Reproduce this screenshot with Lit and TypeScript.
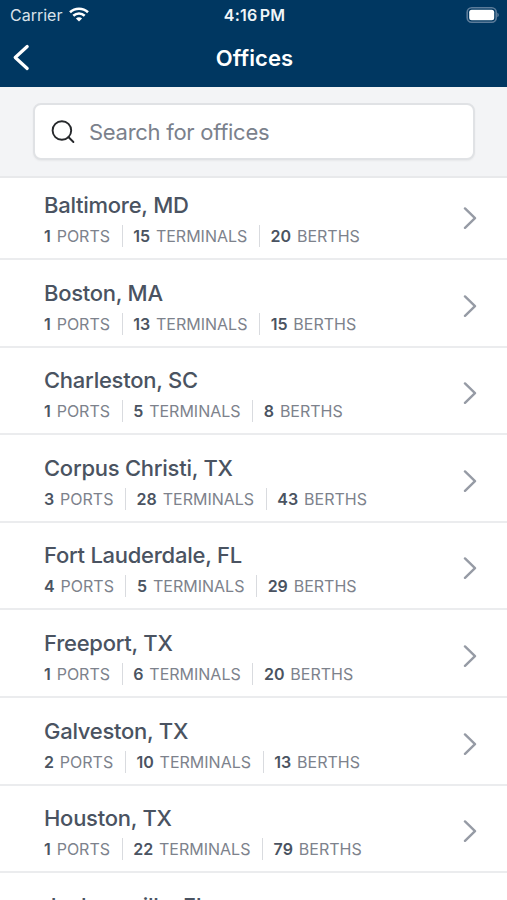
import { LitElement, html, css } from "lit";
import { customElement } from "lit/decorators.js";

interface Office {
  name: string;
  ports: number;
  terminals: number;
  berths: number;
}

const OFFICES: Office[] = [
  { name: "Baltimore, MD", ports: 1, terminals: 15, berths: 20 },
  { name: "Boston, MA", ports: 1, terminals: 13, berths: 15 },
  { name: "Charleston, SC", ports: 1, terminals: 5, berths: 8 },
  { name: "Corpus Christi, TX", ports: 3, terminals: 28, berths: 43 },
  { name: "Fort Lauderdale, FL", ports: 4, terminals: 5, berths: 29 },
  { name: "Freeport, TX", ports: 1, terminals: 6, berths: 20 },
  { name: "Galveston, TX", ports: 2, terminals: 10, berths: 13 },
  { name: "Houston, TX", ports: 1, terminals: 22, berths: 79 },
  { name: "Jacksonville, FL", ports: 1, terminals: 12, berths: 24 },
];

@customElement("app-root")
export class AppRoot extends LitElement {
  static styles = css`
    :host {
      display: flex;
      flex-direction: column;
      height: 900px;
      overflow: hidden;
      background: #fff;
      font-family: Inter, "Liberation Sans", sans-serif;
      color: #4a5361;
    }
    * {
      box-sizing: border-box;
    }
    svg {
      display: block;
      flex: none;
    }
    .top {
      flex: none;
      height: 87px;
      background: #003761;
      color: #fff;
    }
    .status,
    .nav {
      display: grid;
      grid-template-columns: 1fr auto 1fr;
      align-items: center;
    }
    .status {
      height: 29px;
      padding: 0 8px 0 10px;
    }
    .carrier {
      display: flex;
      align-items: center;
      gap: 7px;
      color: #d9e2ea;
      font-size: 16px;
    }
    .time {
      font-size: 16px;
      font-weight: 600;
      color: #f1f5f8;
      letter-spacing: 0.2px;
      word-spacing: -2px;
    }
    .battery {
      justify-self: end;
    }
    .nav {
      height: 57px;
      padding: 0 12px;
    }
    .title {
      padding-left: 2px;
      font-size: 22px;
      font-weight: 600;
      line-height: 28px;
      letter-spacing: 0.1px;
    }
    .search {
      flex: none;
      height: 91px;
      padding: 16px 32px 17px 33px;
      background: #f3f4f6;
      border-bottom: 2px solid #e8e9eb;
    }
    .field {
      display: flex;
      align-items: center;
      gap: 14px;
      height: 57px;
      padding-left: 16px;
      border: 2px solid #e0e2e5;
      border-radius: 8px;
      background: #fff;
      color: #7b818c;
      font-size: 22px;
      letter-spacing: -0.28px;
      box-shadow: 0 1px 2px rgba(0, 0, 0, 0.05);
    }
    .list {
      flex: 1;
      min-height: 0;
      overflow: hidden;
    }
    .row {
      display: flex;
      align-items: center;
      justify-content: space-between;
      height: 87.6px;
      padding: 7.8px 30px 0 44px;
      border-bottom: 2px solid #ebecee;
    }
    .row:first-child {
      margin-top: -5.6px;
    }
    .name {
      font-size: 22px;
      font-weight: 500;
      line-height: 28px;
      letter-spacing: -0.26px;
    }
    .stats {
      display: flex;
      align-items: center;
      margin-top: 6px;
      height: 22px;
      font-size: 16px;
      color: #7d828c;
    }
    .stat + .stat {
      margin-left: 11.5px;
      padding-left: 10.7px;
      border-left: 1.6px solid #d9dbdf;
    }
    .stat {
      line-height: 22px;
      white-space: pre;
    }
    b {
      margin-right: 1.4px;
      font-weight: 600;
      color: #4a5361;
    }
  `;

  render() {
    return html`
      <header class="top">
        <div class="status">
          <span class="carrier">
            <span class="carrier-name">Carrier</span>
            <svg width="20" height="15" viewBox="0 0 20 15" fill="none" stroke="#fff" stroke-width="2.6">
              <path d="M1 5.2C6 .6 14 .6 19 5.2" />
              <path d="M4.3 8.7c3.3-3 8.1-3 11.4 0" />
              <path d="M10 14.6 6.9 11.5c1.8-1.6 4.4-1.6 6.2 0z" fill="#fff" stroke="none" />
            </svg>
          </span>
          <span class="time">4:16 PM</span>
          <svg class="battery" width="33" height="16" viewBox="0 0 33 16">
            <rect x="1.2" y=".8" width="29" height="14.4" rx="4.5" fill="none" stroke="#5c7c9a" stroke-width="1.6" />
            <rect x="3.2" y="2.7" width="25" height="10.6" rx="2.5" fill="#fff" />
            <path d="M31.3 5.8c2 .7 2 3.7 0 4.4z" fill="#5c7c9a" />
          </svg>
        </div>
        <div class="nav">
          <svg width="18" height="28" viewBox="0 0 18 28" fill="none" stroke="#fff" stroke-width="3.2" stroke-linecap="round" stroke-linejoin="round">
            <path d="M15.2 2.5 3.2 13.5l12 11" />
          </svg>
          <span class="title">Offices</span>
        </div>
      </header>
      <div class="search">
        <div class="field">
          <svg width="24" height="24" viewBox="0 0 24 24" fill="none" stroke="#26282b" stroke-width="1.9" stroke-linecap="round">
            <circle cx="10.9" cy="10.5" r="9.3" />
            <path d="m17.4 17 5 5" />
          </svg>
          <span class="placeholder">Search for offices</span>
        </div>
      </div>
      <main class="list">${OFFICES.map((o) => this.row(o))}</main>
    `;
  }

  private row(o: Office) {
    return html`<div class="row">
      <div class="info">
        <div class="name">${o.name}</div>
        <div class="stats">
          <span class="stat"><b>${o.ports}</b> PORTS</span>
          <span class="stat"><b>${o.terminals}</b> TERMINALS</span>
          <span class="stat"><b>${o.berths}</b> BERTHS</span>
        </div>
      </div>
      <svg width="14" height="24" viewBox="0 0 14 24" fill="none" stroke="#969ba5" stroke-width="2.4" stroke-linecap="round" stroke-linejoin="round">
        <path d="m2 1.4 10 9.7-10 9.7" />
      </svg>
    </div>`;
  }
}
